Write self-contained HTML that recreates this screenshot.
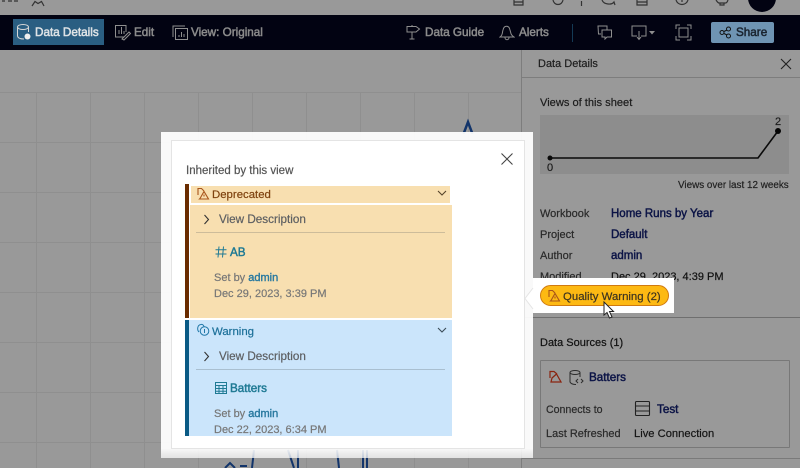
<!DOCTYPE html>
<html><head><meta charset="utf-8">
<style>
html,body{margin:0;padding:0;background:#999}
#r{position:relative;width:800px;height:468px;overflow:hidden;background:#999;font-family:"Liberation Sans",sans-serif;font-size:11px;filter:blur(.25px)}
#r div,#r svg{position:absolute}
.t{white-space:nowrap;line-height:14px;-webkit-text-stroke:.2px currentColor}
.h{white-space:nowrap;line-height:14px;font-size:11.7px;-webkit-text-stroke:.5px currentColor}
.l{white-space:nowrap;line-height:14px;font-size:11.5px;color:#0c1446;-webkit-text-stroke:.45px currentColor}
.m{white-space:nowrap;line-height:14px;font-size:11.7px;color:#1f7a94;-webkit-text-stroke:.45px currentColor}
.a{color:#2a7aa0;-webkit-text-stroke:.4px currentColor}
svg{fill:none}
</style></head><body><div id="r">
<!-- background grid -->
<svg style="left:0;top:50px" width="522" height="418"><g stroke="#8f8f8f" stroke-width="1">
<path d="M36.500 42V418M90.500 42V418M144.500 42V418M198.500 42V418M252.500 42V418M306.500 42V418M360.500 42V418M414.500 42V418M468.500 42V418"/>
<path d="M0 42.500H522M0 92.500H522M0 142.500H522M0 192.500H522M0 242.500H522M0 292.500H522M0 342.500H522M0 392.500H522"/></g></svg>
<!-- top strip icons -->
<svg style="left:0;top:0" width="800" height="15" stroke="#333" stroke-width="1.200">
<path d="M2 1H5M8 1H12M14 1H18"/>
<path d="M32 6L35 1.500L38 3.500L41.500 1.500L44 6"/>
<path d="M514 0V5H523V0M514 2H523M553 0C554 6 562 6 563 0M581.500 1V6M602 0C604 5 612 5 614 2L615 5M637 0V5H647V0M637 2H647M676 0C678 6 686 6 688 0M682 0V2M716 0C718 3 719 3 719 3H725C726 3 727 3 728 0M720 3V5H724V3"/>
</svg>
<div style="left:748px;top:-16px;width:28px;height:28px;background:#020312;border-radius:50%"></div>
<!-- header -->
<div style="left:0;top:15px;width:800px;height:35px;background:#020312"></div>
<div style="left:13px;top:19px;width:91px;height:26px;background:#2a5e82"></div>
<svg style="left:15px;top:23px" width="18" height="19" stroke="#d6d6d6" stroke-width="1"><ellipse cx="8" cy="4" rx="5.500" ry="2.500"/><path d="M2.500 4V13C3 16 7 16 9 16M13.500 4V9"/><circle cx="12.500" cy="13.500" r="3" fill="#eee" stroke="none"/></svg>
<div class="h" style="left:35px;top:26px;color:#dfe3e6">Data Details</div>
<svg style="left:114px;top:24px" width="18" height="17" stroke="#8f8f8f" stroke-width="1"><path d="M10 13H1.500V1.500H12V8M5 10V6M7.500 10V3M10 10V7"/><path d="M8 15L15 8L16.500 9.500L10 16Z"/></svg>
<div class="h" style="left:134px;top:26px;color:#8b8b8b">Edit</div>
<svg style="left:171px;top:24px" width="18" height="17" stroke="#8f8f8f" stroke-width="1"><path d="M2 13V2H14"/><path d="M4.500 15.500V4.500H16.500V15.500ZM8 13V11M10.500 13V8M13 13V10"/></svg>
<div class="h" style="left:191px;top:26px;color:#8b8b8b">View: Original</div>
<svg style="left:404px;top:24px" width="18" height="17" stroke="#8f8f8f" stroke-width="1"><path d="M3 2.500H12L15.500 5L12 8H3ZM8 8V15M5.500 15H10.500M8 1V2.500"/></svg>
<div class="h" style="left:425px;top:26px;color:#8b8b8b">Data Guide</div>
<svg style="left:499px;top:24px" width="16" height="17" stroke="#8f8f8f" stroke-width="1"><path d="M1 13C4 11 3 9 4 6C5 1 10 1 11 6C12 9 11.500 11 15 13ZM6 13.500C6 16.500 10 16.500 10 13.500"/></svg>
<div class="h" style="left:519px;top:26px;color:#8b8b8b">Alerts</div>
<div style="left:572px;top:24px;width:1px;height:18px;background:#143a55"></div>
<svg style="left:597px;top:25px" width="16" height="15" stroke="#8f8f8f" stroke-width="1"><path d="M4 9H1.500L1 1H10V5M5 5H14.500V12H10L8 14V12H5Z"/></svg>
<svg style="left:631px;top:25px" width="26" height="16" stroke="#8f8f8f" stroke-width="1"><path d="M6 11H1V1H15V11H10M8 6V14M6 12L8 14.500L10 12"/><path d="M18 6H24L21 9.500Z" fill="#8f8f8f" stroke="none"/></svg>
<svg style="left:675px;top:24px" width="17" height="17" stroke="#8f8f8f" stroke-width="1"><path d="M1 5V1H5M12 1H16V5M16 12V16H12M5 16H1V12"/><rect x="4" y="4" width="9" height="9"/></svg>
<div style="left:711px;top:22px;width:63px;height:21px;background:#6f94b3;border-radius:2px"></div>
<svg style="left:719px;top:26px" width="13" height="13" stroke="#111" stroke-width="1"><circle cx="3" cy="6.500" r="2"/><circle cx="9.500" cy="3" r="2"/><circle cx="9.500" cy="10" r="2"/><path d="M5 5.500L8 4M5 7.500L8 9"/></svg>
<div class="h" style="left:736px;top:26px;color:#1a2430">Share</div>
<!-- right panel -->
<div style="left:521px;top:50px;width:1px;height:418px;background:#7d7d7d"></div>
<div style="left:522px;top:77px;width:278px;height:1px;background:#7d7d7d"></div>
<div class="t" style="left:538px;top:57px;color:#1d1d1d">Data Details</div>
<svg style="left:780px;top:58px" width="12" height="12" stroke="#222" stroke-width="1.100"><path d="M1 1L11 11M11 1L1 11"/></svg>
<div class="t" style="left:540px;top:96px;color:#1d1d1d;font-size:11.100px">Views of this sheet</div>
<div style="left:540px;top:115px;width:249px;height:59px;background:#8d8d8d"></div>
<svg style="left:540px;top:115px" width="249" height="59"><path d="M10 43H218L238 16" stroke="#0a0a0a" stroke-width="1.600"/><circle cx="10" cy="43" r="2.500" fill="#0a0a0a"/><circle cx="238" cy="16" r="3" fill="#050505"/></svg>
<div class="t" style="left:547px;top:161px;color:#1d1d1d">0</div>
<div class="t" style="left:775px;top:115px;color:#1d1d1d">2</div>
<div class="t" style="left:678px;top:179px;color:#222;font-size:9.900px">Views over last 12 weeks</div>
<div class="t" style="left:540px;top:207px;color:#2a2a2a">Workbook</div>
<div class="l" style="left:611px;top:207px">Home Runs by Year</div>
<div class="t" style="left:540px;top:228px;color:#2a2a2a">Project</div>
<div class="l" style="left:611px;top:228px">Default</div>
<div class="t" style="left:540px;top:249px;color:#2a2a2a">Author</div>
<div class="l" style="left:611px;top:249px">admin</div>
<div class="t" style="left:540px;top:270px;color:#2a2a2a">Modified</div>
<div class="t" style="left:611px;top:270px;color:#111">Dec 29, 2023, 4:39 PM</div>
<div style="left:522px;top:317px;width:278px;height:1px;background:#6f6f6f"></div>
<div class="t" style="left:540px;top:336px;color:#111">Data Sources (1)</div>
<div style="left:540px;top:360px;width:248px;height:86px;border:1px solid #787878;border-radius:1px"></div>
<svg style="left:549px;top:370px" width="13" height="14" stroke="#8a2410" stroke-width="1.200"><path d="M1 8V1.500H5L8 4M3 8L7.500 4L12 12H2Z"/></svg>
<svg style="left:568px;top:369px" width="18" height="17" stroke="#2c2c2c" stroke-width="1"><ellipse cx="7" cy="3.500" rx="5" ry="2"/><path d="M2 3.500V13C3 15 6 15.500 8 15.500M12 3.500V8M10 10L8 12L10 14M13 10L15 12L13 14"/></svg>
<div class="l" style="left:589px;top:371px;font-size:11.700px">Batters</div>
<div class="t" style="left:546px;top:403px;color:#2a2a2a;font-size:10.600px">Connects to</div>
<svg style="left:634px;top:400px" width="18" height="17" stroke="#222" stroke-width="1.100"><rect x="1.500" y="1.500" width="14" height="14" rx="1"/><path d="M1.500 6H15.500M1.500 11H15.500"/></svg>
<div class="l" style="left:657px;top:403px;font-size:11.700px">Test</div>
<div class="t" style="left:546px;top:427px;color:#2a2a2a;font-size:11px">Last Refreshed</div>
<div class="t" style="left:634px;top:427px;color:#151515;font-size:11.200px">Live Connection</div>
<div style="left:522px;top:458px;width:278px;height:1px;background:#7a7a7a"></div>
<!-- bottom chart remnants -->
<svg style="left:200px;top:448px" width="200" height="20" stroke="#12346a" stroke-width="2"><path d="M25 20L30 15L35 20M40 18H47M52 20L54 2M88 2L94 20M98 2V20M137 2L139 20M163 2V20M167 2V20"/></svg>
<!-- top spike -->
<svg style="left:455px;top:118px" width="26" height="16" stroke="#12346a" stroke-width="2.500"><path d="M8.500 16L13 4L17.500 16"/></svg>
<!-- highlight frame -->
<div style="left:161px;top:132px;width:372px;height:317px;background:rgba(255,255,255,.94)"></div>
<div style="left:161px;top:449px;width:372px;height:9px;background:linear-gradient(rgba(255,255,255,.92),rgba(255,255,255,.72))"></div>
<div style="left:171px;top:140px;width:354px;height:309px;background:#fff;border:1px solid #e4e4e4;box-sizing:border-box"></div>
<div style="left:533px;top:278px;width:141px;height:35px;background:#fff"></div>
<svg style="left:522px;top:285px" width="13" height="26"><path d="M11 3L3 13.500L11 24" fill="#fff" stroke="#e4e4e4"/></svg>
<div class="t" style="left:186px;top:164px;color:#555;font-size:11.500px">Inherited by this view</div>
<svg style="left:500px;top:152px" width="14" height="14" stroke="#444" stroke-width="1.100"><path d="M1.500 1.500L12.500 12.500M12.500 1.500L1.500 12.500"/></svg>
<!-- Deprecated -->
<div style="left:185px;top:184px;width:4px;height:134px;background:#6a2c00"></div>
<div style="left:191px;top:186px;width:259px;height:17px;background:#f8dfb0"></div>
<div style="left:190px;top:205px;width:262px;height:113px;background:#f8dfb0"></div>
<svg style="left:196px;top:187px" width="14" height="14" stroke="#a8541a" stroke-width="1.100"><path d="M2 8V1.500H5.500L8 4M4 11.500L8 4.500L12.500 12H3.500ZM8 7.500V9.500"/></svg>
<div class="t" style="left:212px;top:188px;color:#7f430f;font-size:11.400px">Deprecated</div>
<svg style="left:437px;top:190px" width="10" height="7" stroke="#55432a" stroke-width="1.100"><path d="M1 1L5 5L9 1"/></svg>
<svg style="left:203px;top:214px" width="7" height="11" stroke="#333" stroke-width="1.100"><path d="M1.500 1L5.500 5.500L1.500 10"/></svg>
<div class="t" style="left:219px;top:213px;color:#5d5f62;font-size:11.700px">View Description</div>
<div style="left:196px;top:232px;width:249px;height:1px;background:#cdbc9a"></div>
<svg style="left:215px;top:246px" width="12" height="12" stroke="#1f7a94" stroke-width="1"><path d="M4 .500L3 11.500M8.500 .500L7.500 11.500M.500 3.800H11.500M.500 8H11.500"/></svg>
<div class="m" style="left:230px;top:246px">AB</div>
<div class="t" style="left:214px;top:271px;color:#777;font-size:11px">Set by <span class="a">admin</span></div>
<div class="t" style="left:214px;top:287px;color:#777;font-size:11px">Dec 29, 2023, 3:39 PM</div>
<!-- Warning -->
<div style="left:185px;top:320px;width:4px;height:116px;background:#0a5a85"></div>
<div style="left:189px;top:320px;width:263px;height:116px;background:#cbe5fb"></div>
<svg style="left:196px;top:323px" width="14" height="14" stroke="#2078a8" stroke-width="1"><path d="M3 9C1 7 1 2 5 1.500C7 1 8 3 8 4"/><circle cx="8.500" cy="8" r="4.300"/><path d="M8.500 6V10"/></svg>
<div class="t" style="left:212px;top:325px;color:#1c7099;font-size:11.400px">Warning</div>
<svg style="left:437px;top:327px" width="10" height="7" stroke="#3b4c58" stroke-width="1.100"><path d="M1 1L5 5L9 1"/></svg>
<svg style="left:203px;top:351px" width="7" height="11" stroke="#333" stroke-width="1.100"><path d="M1.500 1L5.500 5.500L1.500 10"/></svg>
<div class="t" style="left:219px;top:350px;color:#5d5f62;font-size:11.700px">View Description</div>
<div style="left:196px;top:369px;width:249px;height:1px;background:#a9bfd0"></div>
<svg style="left:215px;top:382px" width="12" height="12" stroke="#1f7a94" stroke-width="1"><rect x=".500" y=".500" width="11" height="11"/><path d="M.500 3.500H11.500M.500 6.500H11.500M.500 9.300H11.500M4 3.500V11.500M8 3.500V11.500"/></svg>
<div class="m" style="left:230px;top:382px">Batters</div>
<div class="t" style="left:214px;top:407px;color:#777;font-size:11px">Set by <span class="a">admin</span></div>
<div class="t" style="left:214px;top:423px;color:#777;font-size:11px">Dec 22, 2023, 6:34 PM</div>
<!-- Pill -->
<div style="left:540px;top:285px;width:129px;height:21px;box-sizing:border-box;background:#fdb913;border:1px solid #d07a10;border-radius:11px"></div>
<svg style="left:547px;top:289px" width="14" height="14" stroke="#a8541a" stroke-width="1.100"><path d="M2 8V1.500H5.500L8 4M4 11.500L8 4.500L12.500 12H3.500ZM8 7.500V9.500"/></svg>
<div class="t" style="left:563px;top:290px;color:#3c3320;font-size:11.400px">Quality Warning (2)</div>
<svg style="left:602px;top:301px" width="14" height="20"><path d="M2 1L2 14L5 11.500L7.500 17L10 16L7.500 10.500L11.500 10.500Z" fill="#fff" stroke="#222"/></svg>
</div></body></html>
